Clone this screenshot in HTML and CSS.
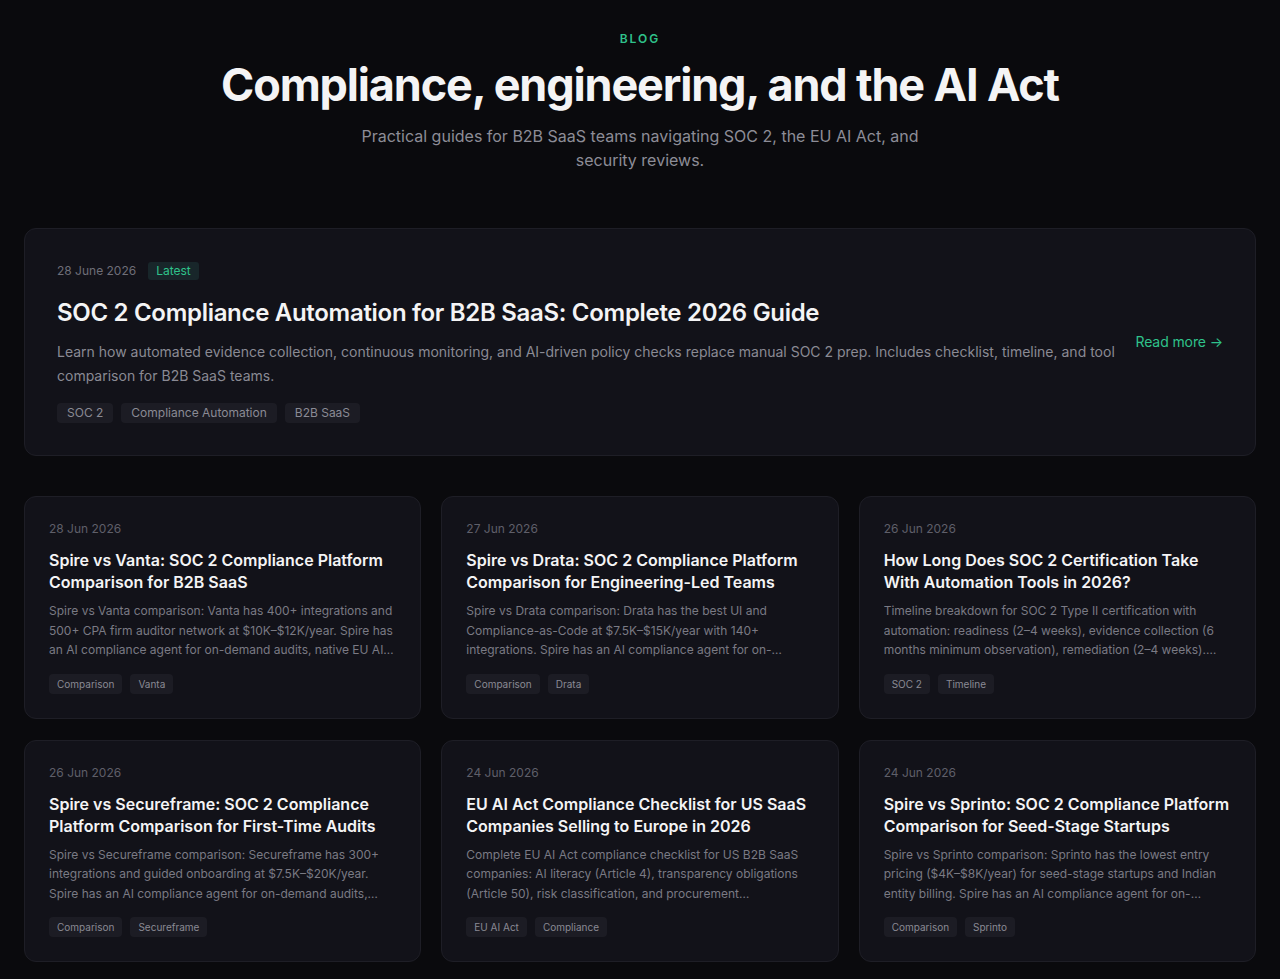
FILE: index.html
```html
<!DOCTYPE html>
<html lang="en">
<head>
<meta charset="utf-8">
<title>Blog</title>
<link rel="stylesheet" href="styles.css">
</head>
<body>
<main class="page">
  <header class="hero">
    <div class="eyebrow">BLOG</div>
    <h1 class="hero-title">Compliance, engineering, and the AI Act</h1>
    <p class="hero-sub">Practical guides for B2B SaaS teams navigating SOC 2, the EU AI Act, and security reviews.</p>
  </header>

  <article class="featured">
    <div class="featured-body">
      <div class="meta">
        <span class="date">28 June 2026</span>
        <span class="badge">Latest</span>
      </div>
      <h2 class="featured-title">SOC 2 Compliance Automation for B2B SaaS: Complete 2026 Guide</h2>
      <p class="featured-desc">Learn how automated evidence collection, continuous monitoring, and AI-driven policy checks replace manual SOC 2 prep. Includes checklist, timeline, and tool comparison for B2B SaaS teams.</p>
      <div class="tags tags-lg">
        <span class="tag">SOC 2</span>
        <span class="tag">Compliance Automation</span>
        <span class="tag">B2B SaaS</span>
      </div>
    </div>
    <a class="read-more" href="#">Read more →</a>
  </article>

  <section class="grid">
    <article class="card">
      <div class="card-date">28 Jun 2026</div>
      <h3 class="card-title">Spire vs Vanta: SOC 2 Compliance Platform Comparison for B2B SaaS</h3>
      <p class="card-desc">Spire vs Vanta comparison: Vanta has 400+ integrations and 500+ CPA firm auditor network at $10K–$12K/year. Spire has an AI compliance agent for on-demand audits, native EU AI Act support, and flat pricing.</p>
      <div class="tags"><span class="tag">Comparison</span><span class="tag">Vanta</span></div>
    </article>
    <article class="card">
      <div class="card-date">27 Jun 2026</div>
      <h3 class="card-title">Spire vs Drata: SOC 2 Compliance Platform Comparison for Engineering-Led Teams</h3>
      <p class="card-desc">Spire vs Drata comparison: Drata has the best UI and Compliance-as-Code at $7.5K–$15K/year with 140+ integrations. Spire has an AI compliance agent for on-demand audits and native EU AI Act support.</p>
      <div class="tags"><span class="tag">Comparison</span><span class="tag">Drata</span></div>
    </article>
    <article class="card">
      <div class="card-date">26 Jun 2026</div>
      <h3 class="card-title">How Long Does SOC 2 Certification Take With Automation Tools in 2026?</h3>
      <p class="card-desc">Timeline breakdown for SOC 2 Type II certification with automation: readiness (2–4 weeks), evidence collection (6 months minimum observation), remediation (2–4 weeks). Total: 7–9 months end to end.</p>
      <div class="tags"><span class="tag">SOC 2</span><span class="tag">Timeline</span></div>
    </article>
    <article class="card">
      <div class="card-date">26 Jun 2026</div>
      <h3 class="card-title">Spire vs Secureframe: SOC 2 Compliance Platform Comparison for First-Time Audits</h3>
      <p class="card-desc">Spire vs Secureframe comparison: Secureframe has 300+ integrations and guided onboarding at $7.5K–$20K/year. Spire has an AI compliance agent for on-demand audits, native EU AI Act support.</p>
      <div class="tags"><span class="tag">Comparison</span><span class="tag">Secureframe</span></div>
    </article>
    <article class="card">
      <div class="card-date">24 Jun 2026</div>
      <h3 class="card-title">EU AI Act Compliance Checklist for US SaaS Companies Selling to Europe in 2026</h3>
      <p class="card-desc">Complete EU AI Act compliance checklist for US B2B SaaS companies: AI literacy (Article 4), transparency obligations (Article 50), risk classification, and procurement questionnaires.</p>
      <div class="tags"><span class="tag">EU AI Act</span><span class="tag">Compliance</span></div>
    </article>
    <article class="card">
      <div class="card-date">24 Jun 2026</div>
      <h3 class="card-title">Spire vs Sprinto: SOC 2 Compliance Platform Comparison for Seed-Stage Startups</h3>
      <p class="card-desc">Spire vs Sprinto comparison: Sprinto has the lowest entry pricing ($4K–$8K/year) for seed-stage startups and Indian entity billing. Spire has an AI compliance agent for on-demand audits.</p>
      <div class="tags"><span class="tag">Comparison</span><span class="tag">Sprinto</span></div>
    </article>
  </section>
</main>
</body>
</html>
```

FILE: styles.css
```css
* { box-sizing: border-box; }
html, body { margin: 0; padding: 0; }
body {
  background: #0a0a0d;
  color: #f4f4f5;
  font-family: Inter, "Noto Sans", "DejaVu Sans", sans-serif;
  -webkit-font-smoothing: antialiased;
}
.page {
  padding: 31px 24px 40px;
}
.hero {
  text-align: center;
  display: flex;
  flex-direction: column;
  align-items: center;
}
.eyebrow {
  font-size: 12px;
  line-height: 16px;
  font-weight: 600;
  letter-spacing: 2px;
  color: #2fc28b;
}
.hero-title {
  margin: 11px 0 0;
  font-size: 45px;
  line-height: 54px;
  font-weight: 700;
  letter-spacing: -1.15px;
  color: #f4f4f5;
}
.hero-sub {
  margin: 12px 0 0;
  max-width: 576px;
  font-size: 16px;
  line-height: 24px;
  color: #8d8d97;
}
.featured {
  margin-top: 56px;
  display: flex;
  align-items: center;
  gap: 14px;
  background: #121219;
  border: 1px solid #1e1e26;
  border-radius: 12px;
  padding: 32px;
  min-height: 228px;
}
.featured-body { flex: 1; min-width: 0; }
.meta {
  display: flex;
  align-items: center;
  gap: 12px;
}
.date {
  font-size: 12px;
  line-height: 20px;
  color: #6e6e78;
}
.badge {
  font-size: 12px;
  line-height: 18px;
  padding: 0 8px;
  border-radius: 3px;
  color: #2fc28b;
  background: #18262a;
}
.featured-title {
  margin: 16px 0 0;
  font-size: 24px;
  line-height: 32px;
  font-weight: 600;
  letter-spacing: -0.3px;
  color: #f4f4f5;
}
.featured-desc {
  margin: 11px 0 0;
  font-size: 14px;
  line-height: 24px;
  color: #8a8a94;
}
.tags {
  display: flex;
  gap: 8px;
  margin-top: 16px;
}
.tag {
  font-size: 10px;
  line-height: 20px;
  padding: 0 8px;
  border-radius: 4px;
  background: #1c1c24;
  color: #8a8a94;
}
.tags-lg .tag {
  font-size: 12px;
  padding: 0 10px;
}
.tags-lg { margin-top: 15px; }
.read-more {
  flex: none;
  font-size: 14px;
  line-height: 20px;
  letter-spacing: -0.1px;
  color: #2fc28b;
  text-decoration: none;
}
.grid {
  margin-top: 40px;
  display: grid;
  grid-template-columns: repeat(3, 1fr);
  gap: 21px 20px;
}
.card {
  background: #121219;
  border: 1px solid #1e1e26;
  border-radius: 12px;
  padding: 24px;
  min-height: 222px;
}
.card-date {
  font-size: 12px;
  line-height: 16px;
  color: #5f5f69;
}
.card-title {
  margin: 12px 0 0;
  font-size: 16px;
  line-height: 22px;
  font-weight: 600;
  color: #f4f4f5;
}
.card-desc {
  margin: 8px 0 0;
  font-size: 12px;
  line-height: 19.5px;
  color: #7a7a84;
  display: -webkit-box;
  -webkit-line-clamp: 3;
  -webkit-box-orient: vertical;
  overflow: hidden;
}
.card .tags { margin-top: 14px; }
```
